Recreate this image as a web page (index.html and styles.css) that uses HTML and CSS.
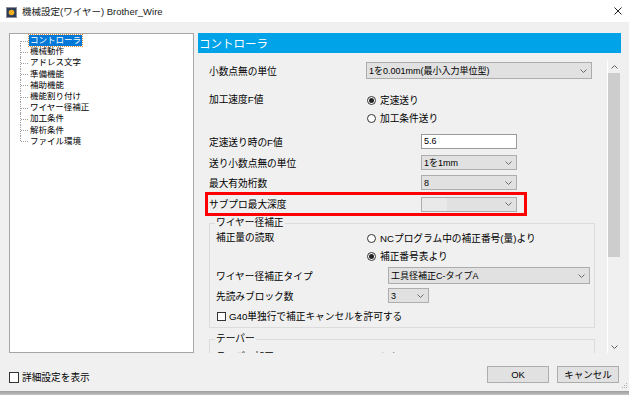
FILE: index.html
```html
<!DOCTYPE html>
<html lang="ja">
<head>
<meta charset="utf-8">
<title>機械設定(ワイヤー) Brother_Wire</title>
<link rel="stylesheet" href="styles.css">
</head>
<body>
<div class="window">
  <div class="titlebar">
    <svg class="app-icon" width="11" height="11" viewBox="0 0 11 11">
      <rect x="0.5" y="0.5" width="10" height="10" fill="#2d3c58" stroke="#8a8f99"/>
      <circle cx="5.5" cy="5.5" r="2.8" fill="#f2b01e"/>
    </svg>
    <span class="title">機械設定(ワイヤー) Brother_Wire</span>
    <svg class="close" width="8" height="8" viewBox="0 0 8 8">
      <path d="M0.5 0.5 L7.5 7.5 M7.5 0.5 L0.5 7.5" stroke="#222" stroke-width="1"/>
    </svg>
  </div>

  <div class="main">
    <div class="tree">
      <ul class="tree-list">
        <li class="sel"><span>コントローラ</span></li>
        <li><span>機械動作</span></li>
        <li><span>アドレス文字</span></li>
        <li><span>準備機能</span></li>
        <li><span>補助機能</span></li>
        <li><span>機能割り付け</span></li>
        <li><span>ワイヤー径補正</span></li>
        <li><span>加工条件</span></li>
        <li><span>解析条件</span></li>
        <li><span>ファイル環境</span></li>
      </ul>
    </div>

    <div class="panel">
      <div class="panel-head">コントローラ</div>
      <div class="scroll">
        <div class="content">
          <div class="row r1">
            <span class="lbl w157">小数点無の単位</span>
            <div class="combo w226 h17"><span class="ctext">1を0.001mm(最小入力単位型)</span><svg class="chev" width="7" height="4" viewBox="0 0 7 4"><path d="M0.5 0.5 L3.5 3.5 L6.5 0.5" fill="none" stroke="#6a6a6a"/></svg></div>
          </div>

          <div class="row r2">
            <span class="lbl w158 lh18">加工速度F値</span>
            <div class="radios">
              <div class="radio on"><span class="dot"></span><span>定速送り</span></div>
              <div class="radio"><span class="dot"></span><span>加工条件送り</span></div>
            </div>
          </div>

          <div class="row r3">
            <span class="lbl w212">定速送り時のF値</span>
            <div class="textbox">5.6</div>
          </div>

          <div class="row r4">
            <span class="lbl w212">送り小数点無の単位</span>
            <div class="combo w96 h15"><span class="ctext">1を1mm</span><svg class="chev" width="7" height="4" viewBox="0 0 7 4"><path d="M0.5 0.5 L3.5 3.5 L6.5 0.5" fill="none" stroke="#6a6a6a"/></svg></div>
          </div>

          <div class="row r5">
            <span class="lbl w212">最大有効桁数</span>
            <div class="combo w96 h15"><span class="ctext">8</span><svg class="chev" width="7" height="4" viewBox="0 0 7 4"><path d="M0.5 0.5 L3.5 3.5 L6.5 0.5" fill="none" stroke="#6a6a6a"/></svg></div>
          </div>

          <div class="row r6">
            <span class="lbl w212">サブプロ最大深度</span>
            <div class="combo w96 h15"><span class="hl"></span><svg class="chev" width="7" height="4" viewBox="0 0 7 4"><path d="M0.5 0.5 L3.5 3.5 L6.5 0.5" fill="none" stroke="#6a6a6a"/></svg></div>
          </div>

          <div class="group g1">
            <div class="gtitle">ワイヤー径補正</div>
            <div class="grow ga">
              <span class="lbl w151 lh18">補正量の読取</span>
              <div class="radios">
                <div class="radio"><span class="dot"></span><span>NCプログラム中の補正番号(量)より</span></div>
                <div class="radio on"><span class="dot"></span><span>補正番号表より</span></div>
              </div>
            </div>
            <div class="grow gb">
              <span class="lbl w172">ワイヤー径補正タイプ</span>
              <div class="combo w202 h17"><span class="ctext">工具径補正C-タイプA</span><svg class="chev" width="7" height="4" viewBox="0 0 7 4"><path d="M0.5 0.5 L3.5 3.5 L6.5 0.5" fill="none" stroke="#6a6a6a"/></svg></div>
            </div>
            <div class="grow gc">
              <span class="lbl w172">先読みブロック数</span>
              <div class="combo w41 h15"><span class="ctext">3</span><svg class="chev" width="7" height="4" viewBox="0 0 7 4"><path d="M0.5 0.5 L3.5 3.5 L6.5 0.5" fill="none" stroke="#6a6a6a"/></svg></div>
            </div>
            <div class="grow gd">
              <span class="check"></span>
              <span>G40単独行で補正キャンセルを許可する</span>
            </div>
          </div>

          <div class="group g2">
            <div class="gtitle">テーパー</div>
            <div class="grow ga gnext">
              <span class="lbl w151 lh18">テーパー加工</span>
              <div class="radios">
                <div class="radio"><span class="dot"></span><span>しない</span></div>
              </div>
            </div>
          </div>
        </div>

        <div class="vscroll">
          <div class="sarrow"><svg width="7" height="4" viewBox="0 0 7 4"><path d="M0.5 3.5 L3.5 0.5 L6.5 3.5" fill="none" stroke="#606060"/></svg></div>
          <div class="thumb"></div>
          <div class="strack"></div>
          <div class="sarrow"><svg width="7" height="4" viewBox="0 0 7 4"><path d="M0.5 0.5 L3.5 3.5 L6.5 0.5" fill="none" stroke="#606060"/></svg></div>
        </div>
      </div>
    </div>
  </div>

  <div class="footer">
    <div class="detail"><span class="check big"></span><span>詳細設定を表示</span></div>
    <div class="buttons">
      <div class="btn">OK</div>
      <div class="btn">キャンセル</div>
    </div>
    <svg class="grip" width="6" height="6" viewBox="0 0 6 6">
      <rect x="4" y="0" width="1" height="1" fill="#b0b0b0"/>
      <rect x="2" y="2" width="1" height="1" fill="#b0b0b0"/>
      <rect x="4" y="2" width="1" height="1" fill="#b0b0b0"/>
      <rect x="0" y="4" width="1" height="1" fill="#b0b0b0"/>
      <rect x="2" y="4" width="1" height="1" fill="#b0b0b0"/>
      <rect x="4" y="4" width="1" height="1" fill="#b0b0b0"/>
    </svg>
  </div>
  <div class="edge"></div>
</div>
</body>
</html>
```

FILE: styles.css
```css
* { box-sizing: border-box; }
html, body { margin: 0; padding: 0; }
body {
  width: 629px;
  height: 395px;
  overflow: hidden;
  background: #f0f0f0;
  font-family: "Liberation Sans", "Noto Sans CJK JP", sans-serif;
  color: #000;
}
.window {
  width: 629px;
  height: 395px;
  display: flex;
  flex-direction: column;
}

/* title bar */
.titlebar {
  height: 22px;
  flex: none;
  background: #fff;
  display: flex;
  align-items: center;
  padding-left: 6px;
}
.app-icon { display: block; margin-top: 2px; }
.title {
  margin-left: 5px;
  margin-top: 1px;
  font-size: 9.5px;
  line-height: 12px;
  color: #1a1a1a;
}
.close {
  display: block;
  margin-left: auto;
  margin-right: 7px;
  margin-top: -1px;
}

/* main */
.main {
  flex: none;
  display: flex;
  gap: 4px;
  margin-top: 11px;
  margin-left: 9px;
  height: 320px;
}

/* tree */
.tree {
  width: 185px;
  height: 320px;
  background: #fff;
  border: 1px solid #a6a6a6;
}
.tree-list {
  list-style: none;
  margin: 0;
  padding: 1px 0 0 0;
}
.tree-list li {
  position: relative;
  height: 11.2px;
  line-height: 11.2px;
  font-size: 8.5px;
  padding-left: 19px;
  white-space: nowrap;
}
.tree-list li span {
  padding: 0 1px;
  display: inline-block;
  height: 10.6px;
  line-height: 10.6px;
}
.tree-list li::before {
  content: "";
  position: absolute;
  left: 11px;
  width: 7px;
  top: 50%;
  border-top: 1px dotted #a0a0a0;
}
.tree-list li::after {
  content: "";
  position: absolute;
  left: 10px;
  top: 0;
  bottom: 0;
  border-left: 1px dotted #a0a0a0;
}
.tree-list li:first-child::after { top: 50%; }
.tree-list li:last-child::after { bottom: 50%; }
.tree-list li.sel span {
  background: #0078d7;
  color: #fff;
  outline: 1px dotted #d98a3a;
}

/* right panel */
.panel {
  width: 423px;
  height: 320px;
  display: flex;
  flex-direction: column;
}
.panel-head {
  height: 20px;
  flex: none;
  background: #00a2e8;
  color: #fff;
  font-family: "Noto Sans CJK JP", sans-serif;
  font-size: 11.5px;
  line-height: 20px;
  padding-left: 1px;
}
.scroll {
  margin-top: 7px;
  height: 293px;
  display: flex;
}
.content {
  width: 409px;
  height: 293px;
  overflow: hidden;
  padding-left: 11px;
  font-size: 9.7px;
}
.vscroll {
  width: 14px;
  height: 293px;
  border-left: 1px solid #ffffff;
  padding-right: 1px;
  display: flex;
  flex-direction: column;
}
.sarrow {
  height: 13px;
  display: flex;
  align-items: center;
  justify-content: center;
  flex: none;
}
.sarrow svg { display: block; }
.thumb {
  height: 184px;
  background: #cdcdcd;
  flex: none;
}
.strack { flex: 1; }

/* rows */
.row { display: flex; align-items: center; }
.lbl { flex: none; white-space: nowrap; }
.lh18 { line-height: 18px; }
.w151 { width: 151px; }
.w157 { width: 157px; }
.w158 { width: 158px; }
.w172 { width: 172px; }
.w212 { width: 212px; }
.w41 { width: 41px; }
.w96 { width: 96px; }
.w202 { width: 202px; }
.w226 { width: 226px; }
.h15 { height: 15px; }
.h17 { height: 17px; }

.r1 { margin-top: 2px; height: 17px; }
.r2 { margin-top: 12px; align-items: flex-start; }
.r3 { margin-top: 7px; height: 15px; }
.r4 { margin-top: 6px; height: 15px; }
.r5 { margin-top: 5px; height: 15px; }
.r6 {
  margin-top: 2px;
  margin-left: -4px;
  width: 322px;
  height: 24px;
  border: 3px solid #ff0000;
  padding-left: 1px;
}

.combo {
  position: relative;
  flex: none;
  display: flex;
  align-items: center;
  background: #e1e1e1;
  border: 1px solid #adadad;
  padding-left: 2px;
  padding-right: 4px;
  font-size: 9px;
  white-space: nowrap;
}
.ctext { flex: 1; overflow: hidden; }
.chev { display: block; margin-left: auto; flex: none; }
.combo .hl {
  width: 25px;
  height: 13px;
  margin-left: -2px;
  background: #e9e9e9;
}

.textbox {
  flex: none;
  width: 96px;
  height: 15px;
  background: #fff;
  border: 1px solid #9a9a9a;
  font-size: 9px;
  line-height: 13px;
  padding-left: 2px;
}

.radios { display: flex; flex-direction: column; }
.radio {
  height: 18px;
  display: flex;
  align-items: center;
  gap: 4px;
  white-space: nowrap;
}
.dot {
  width: 9px;
  height: 9px;
  border: 1px solid #333;
  border-radius: 50%;
  background: #fff;
  display: flex;
  align-items: center;
  justify-content: center;
  flex: none;
}
.radio.on .dot::after {
  content: "";
  width: 5px;
  height: 5px;
  border-radius: 50%;
  background: #222;
}

/* groups */
.group {
  width: 386px;
  border: 1px solid #dcdcdc;
}
.g1 { margin-top: 7px; padding-bottom: 3px; }
.g2 { margin-top: 11px; height: 40px; }
.gtitle {
  margin-top: -7px;
  margin-left: 5px;
  padding: 0 1px;
  width: fit-content;
  background: #f0f0f0;
  line-height: 12px;
  white-space: nowrap;
}
.grow {
  display: flex;
  align-items: center;
  padding-left: 6px;
}
.ga { align-items: flex-start; }
.gnext { margin-top: 3px; }
.gb { margin-top: 2px; height: 17px; }
.gc { margin-top: 4px; height: 15px; }
.gd { margin-top: 5px; height: 16px; padding-left: 7px; gap: 3px; white-space: nowrap; }

.check {
  width: 9px;
  height: 9px;
  border: 1px solid #333;
  background: #fff;
  flex: none;
}
.check.big { width: 10px; height: 11px; }

/* footer */
.footer {
  flex: none;
  height: 38px;
  display: flex;
  align-items: flex-start;
  padding-top: 13px;
  padding-left: 9px;
  position: relative;
}
.detail {
  margin-top: 4px;
  display: flex;
  align-items: center;
  gap: 3px;
  font-size: 9.7px;
  white-space: nowrap;
}
.buttons {
  margin-left: auto;
  margin-right: 10px;
  display: flex;
  gap: 8px;
}
.btn {
  width: 62px;
  height: 17px;
  background: #e1e1e1;
  border: 1px solid #adadad;
  font-size: 9.5px;
  line-height: 15px;
  text-align: center;
}
.grip {
  position: absolute;
  right: 1px;
  bottom: 2px;
  display: block;
}
.edge {
  flex: none;
  height: 4px;
  background: linear-gradient(#9c9c9c, #c4c4c4);
}
```
